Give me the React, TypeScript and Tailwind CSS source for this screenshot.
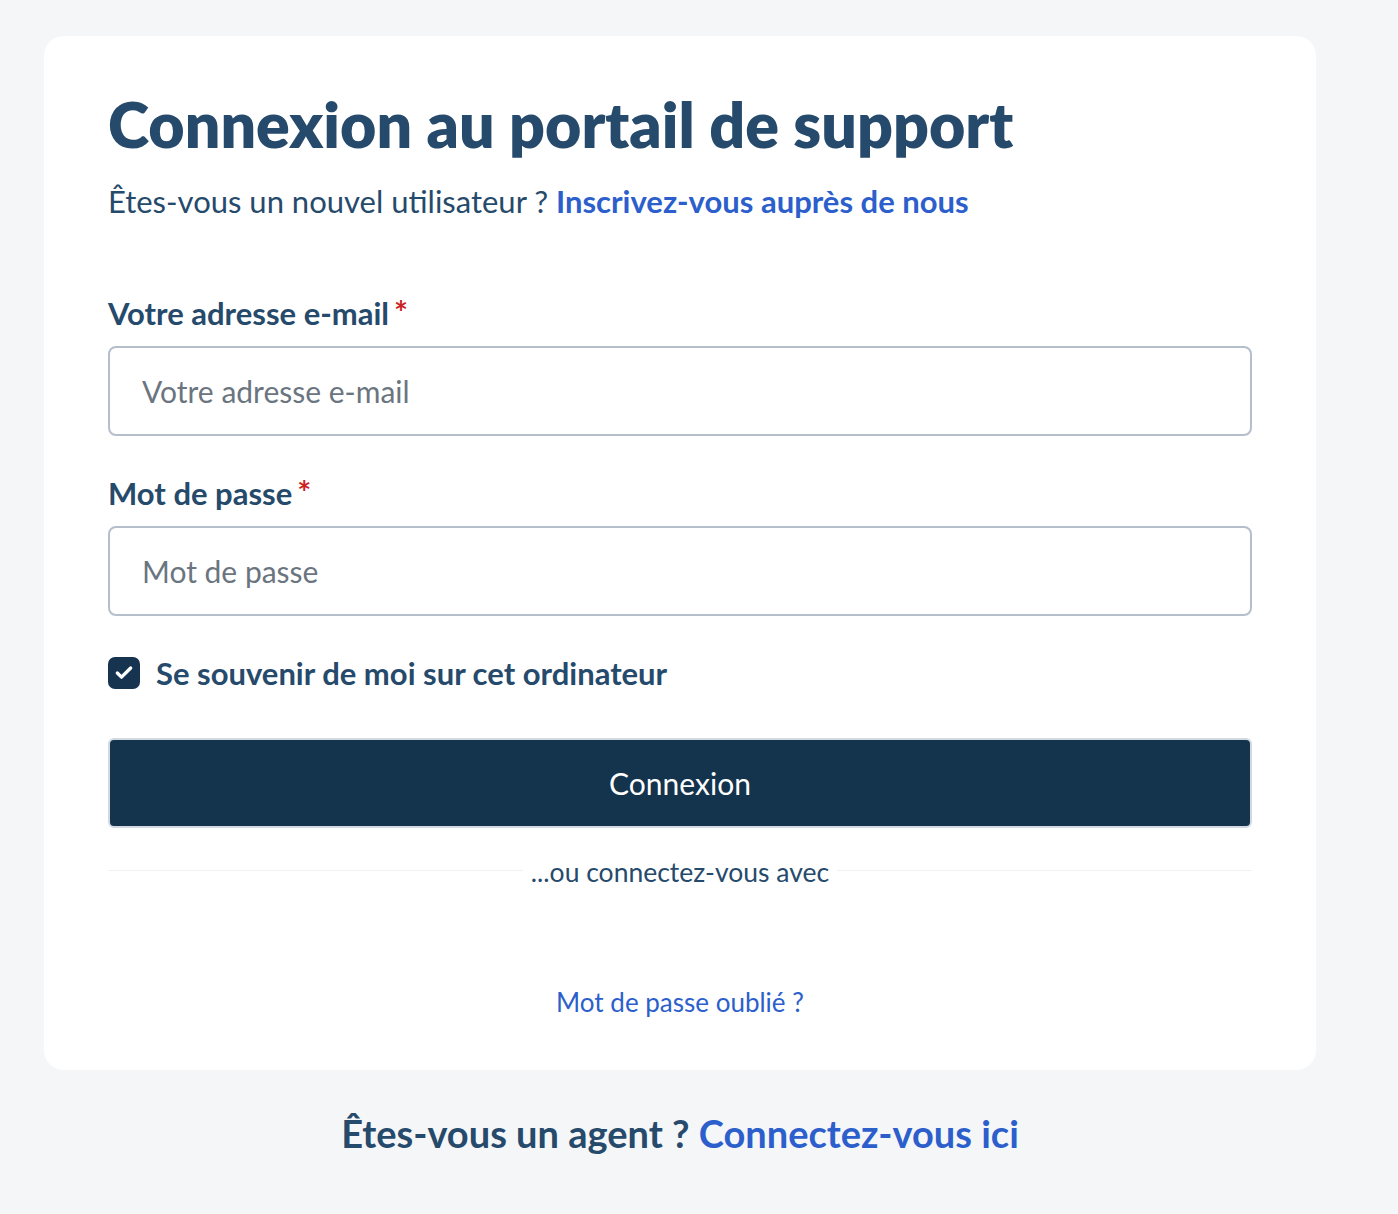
import { Check } from "lucide-react";

const font = { fontFamily: "Lato, 'Noto Sans', sans-serif" };

export default function App() {
  return (
    <div className="min-h-[1214px] bg-[#f5f6f8] pt-[36px]" style={font}>
      <div className="ml-[44px] w-[1272px] rounded-[20px] bg-white px-[64px] pt-[50px] pb-[52px]">
        <h1 className="text-[62.6px] font-extrabold leading-[76px] text-[#264a6b]">
          Connexion au portail de support
        </h1>
        <p className="mt-[21px] text-[31px] leading-[36px] text-[#264a6b]">
          Êtes-vous un nouvel utilisateur ?{" "}
          <a href="#" className="font-bold text-[#2c5fcc]">
            Inscrivez-vous auprès de nous
          </a>
        </p>

        <form className="mt-[76px] flex flex-col">
          <label className="h-[36px] text-[31px] font-bold leading-[36px] text-[#264a6b]">
            Votre adresse e-mail
            <span className="ml-[5px] text-[33px] leading-[0] text-[#cc1f1f]">*</span>
          </label>
          <input
            type="email"
            placeholder="Votre adresse e-mail"
            className="mt-[15px] h-[90px] w-full rounded-[8px] border-2 border-[#b5bfcc] px-[32px] text-[30px] text-[#264a6b] placeholder:text-[#6b7580] outline-none"
          />

          <label className="mt-[39px] h-[36px] text-[31px] font-bold leading-[36px] text-[#264a6b]">
            Mot de passe
            <span className="ml-[5px] text-[33px] leading-[0] text-[#cc1f1f]">*</span>
          </label>
          <input
            type="password"
            placeholder="Mot de passe"
            className="mt-[15px] h-[90px] w-full rounded-[8px] border-2 border-[#b5bfcc] px-[32px] text-[30px] text-[#264a6b] placeholder:text-[#6b7580] outline-none"
          />

          <label className="mt-[39px] flex items-center gap-[16px]">
            <span className="flex h-[32px] w-[32px] items-center justify-center rounded-[7px] bg-[#163450]">
              <Check size={20} strokeWidth={4} className="text-white" />
            </span>
            <span className="text-[31px] font-bold leading-[36px] text-[#264a6b]">
              Se souvenir de moi sur cet ordinateur
            </span>
          </label>

          <button
            type="button"
            className="mt-[47px] h-[90px] w-full rounded-[6px] border-2 border-[#d3d9e0] bg-[#14334d] text-[30px] text-white"
          >
            Connexion
          </button>
        </form>

        <div className="relative mt-[28px] flex justify-center">
          <div className="absolute left-0 right-0 top-[14px] h-px bg-[#f0f1f3]" />
          <span className="relative bg-white px-[8px] text-[26.5px] leading-[32px] text-[#264a6b]">
            ...ou connectez-vous avec
          </span>
        </div>

        <div className="mt-[98px] flex justify-center">
          <a href="#" className="text-[26px] leading-[32px] text-[#2c5fcc]">
            Mot de passe oublié ?
          </a>
        </div>
      </div>

      <p className="ml-[44px] mt-[39px] w-[1272px] text-center text-[38px] font-bold leading-[48px] text-[#264a6b]">
        Êtes-vous un agent ?{" "}
        <a href="#" className="text-[#2c5fcc]">
          Connectez-vous ici
        </a>
      </p>
    </div>
  );
}
